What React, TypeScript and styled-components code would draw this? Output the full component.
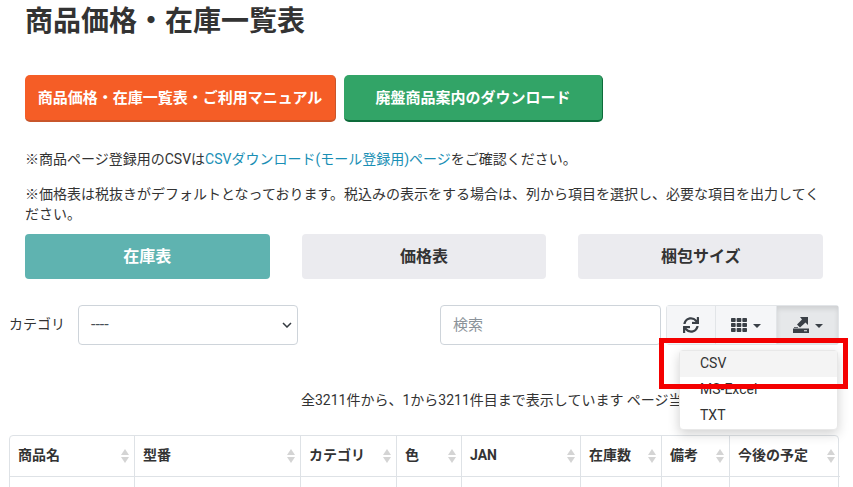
import React from 'react';
import styled, { createGlobalStyle } from 'styled-components';
import { FaSync, FaTh } from 'react-icons/fa';

const GlobalStyle = createGlobalStyle`
	html, body {
		margin: 0;
		height: 487px;
		overflow: hidden;
		background: #fff;
	}
	body {
		font-family: Roboto, 'Noto Sans CJK JP', sans-serif;
		font-size: 14px;
		line-height: 20px;
		color: #333;
	}
`;

const Page = styled.div`
	position: relative;
	width: 853px;
	height: 487px;
	overflow: hidden;
`;

const Content = styled.div`
	padding: 0 30px 0 25px;
`;

const Title = styled.h1`
	margin: 0;
	height: 75px;
	font-size: 28px;
	line-height: 44px;
	font-weight: 700;
	color: #333;
`;

const LinkRow = styled.div`
	display: flex;
	gap: 8px;
	height: 47px;
	margin-bottom: 27px;
`;

const LinkButton = styled.a<{ $bg: string; $edge: string; $width: number }>`
	display: flex;
	align-items: center;
	justify-content: center;
	box-sizing: border-box;
	width: ${p => p.$width}px;
	background: ${p => p.$bg};
	border-bottom: 2px solid ${p => p.$edge};
	border-right: 1px solid ${p => p.$edge};
	border-radius: 5px;
	color: #fff;
	font-size: 15px;
	font-weight: 700;
`;

const Note = styled.p`
	margin: 0 0 15px;
	font-size: 14px;
	line-height: 20px;
	color: #333;

	a {
		color: #1a8fb5;
	}
`;

const Tabs = styled.div`
	display: flex;
	gap: 32px;
	margin-top: -5px;
	width: 798px;
`;

const Tab = styled.div<{ $active?: boolean }>`
	flex: 1;
	height: 45px;
	display: flex;
	align-items: center;
	justify-content: center;
	border-radius: 4px;
	font-size: 16px;
	font-weight: 700;
	background: ${p => (p.$active ? '#5fb3b0' : '#ebebef')};
	color: ${p => (p.$active ? '#fff' : '#333')};
`;

const Toolbar = styled.div`
	display: flex;
	align-items: center;
	height: 40px;
	margin: 26px 14px 0 9px;
`;

const FilterLabel = styled.label`
	width: 69px;
	font-size: 14px;
	color: #333;
	margin-top: -3px;
`;

const SelectBox = styled.div`
	box-sizing: border-box;
	width: 220px;
	height: 40px;
	padding: 0 5px 0 12px;
	display: flex;
	align-items: center;
	justify-content: space-between;
	border: 1px solid #ced4da;
	border-radius: 4px;
	font-size: 16px;
	color: #495057;
`;

const SearchBox = styled.div`
	box-sizing: border-box;
	width: 221px;
	height: 40px;
	margin-left: 142px;
	padding: 0 12px;
	display: flex;
	align-items: center;
	border: 1px solid #ced4da;
	border-radius: 4px;
	font-size: 15px;
	color: #8a9299;
`;

const ButtonGroup = styled.div`
	display: flex;
	height: 40px;
	margin-left: 5px;
	border-radius: 4px;
	overflow: hidden;
`;

const ToolButton = styled.div<{ $width: number; $open?: boolean }>`
	box-sizing: border-box;
	width: ${p => p.$width}px;
	display: flex;
	align-items: center;
	justify-content: center;
	gap: 6px;
	color: #3a4047;
	border: 1px solid #e2e5e8;
	border-left: 0;
	background: ${p => (p.$open ? '#e6e8ea' : '#f5f6f8')};
	box-shadow: ${p => (p.$open ? 'inset 0 3px 5px rgba(0, 0, 0, 0.1)' : 'none')};

	&:first-child {
		border-left: 1px solid #e2e5e8;
	}
`;

const Caret = styled.span`
	width: 0;
	height: 0;
	margin-top: 2px;
	border-left: 4px solid transparent;
	border-right: 4px solid transparent;
	border-top: 4px solid #3a4047;
`;

const PageInfo = styled.div`
	margin: 45px 0 0;
	padding-left: 276px;
	height: 20px;
	white-space: nowrap;
	font-size: 14px;
	color: #333;
`;

const Table = styled.div`
	display: grid;
	grid-template-columns: 125px 166px 96px 65px 119px 81px 68px 110px;
	width: 830px;
	margin: 25px 0 0 -16px;
	border: 1px solid #dee2e6;
	border-radius: 4px 4px 0 0;
	box-sizing: border-box;
`;

const HeadCell = styled.div`
	box-sizing: border-box;
	height: 41px;
	padding: 0 5px 2px 8px;
	display: flex;
	align-items: center;
	justify-content: space-between;
	font-size: 14px;
	font-weight: 700;
	color: #333;
	border-right: 1px solid #dee2e6;
	border-bottom: 1px solid #dee2e6;

	&:nth-child(8n) {
		border-right: 0;
	}
`;

const BodyCell = styled.div`
	height: 40px;
	border-right: 1px solid #dee2e6;

	&:nth-child(8n) {
		border-right: 0;
	}
`;

const Sorter = styled.span`
	display: flex;
	flex-direction: column;
	gap: 2px;
	margin-top: 2px;

	&::before,
	&::after {
		content: '';
		width: 0;
		height: 0;
		border-left: 4px solid transparent;
		border-right: 4px solid transparent;
	}
	&::before {
		border-bottom: 6px solid #d4d4d4;
	}
	&::after {
		border-top: 6px solid #d4d4d4;
	}
`;

const Menu = styled.div`
	position: absolute;
	left: 679px;
	top: 350px;
	width: 159px;
	height: 80px;
	box-sizing: border-box;
	background: #fff;
	border-radius: 4px;
	border: 1px solid #e8e8e8;
	box-shadow: 0 4px 12px rgba(0, 0, 0, 0.18);
`;

const MenuItem = styled.div<{ $hover?: boolean }>`
	height: 26px;
	line-height: 25px;
	padding-left: 20px;
	font-size: 14px;
	color: #333;
	background: ${p => (p.$hover ? '#f4f4f4' : 'transparent')};
`;

const Highlight = styled.div`
	position: absolute;
	left: 659px;
	top: 338px;
	width: 189px;
	height: 51px;
	box-sizing: border-box;
	border: 5px solid #f40000;
`;

const ExportIcon = () => (
	<svg width='16' height='16' viewBox='0 0 16 16' fill='#3a4047'>
		<path fillRule='evenodd' d='M0 11.5h16V16H0zM11 13.3v1h3v-1z' />
		<path d='M1 10h4v.8H1z' />
		<path d='M7 0h8v8l-2.5-2.5L7 10.5l-3-3L9 2.5z' />
	</svg>
);

const Chevron = () => (
	<svg width='10' height='6' viewBox='0 0 10 6' fill='none' stroke='#343a40' strokeWidth='1.5'>
		<path d='M1 1l4 4 4-4' />
	</svg>
);

const columns = ['商品名', '型番', 'カテゴリ', '色', 'JAN', '在庫数', '備考', '今後の予定'];

export default function App() {
	return (
		<Page>
			<GlobalStyle />
			<Content>
				<Title>商品価格・在庫一覧表</Title>
				<LinkRow>
					<LinkButton $bg='#f55d26' $edge='#c9562b' $width={311}>
						商品価格・在庫一覧表・ご利用マニュアル
					</LinkButton>
					<LinkButton $bg='#32a467' $edge='#0d6b3a' $width={259}>
						廃盤商品案内のダウンロード
					</LinkButton>
				</LinkRow>
				<Note>
					※商品ページ登録用のCSVは<a>CSVダウンロード(モール登録用)ページ</a>をご確認ください。
				</Note>
				<Note>
					※価格表は税抜きがデフォルトとなっております。税込みの表示をする場合は、列から項目を選択し、必要な項目を出力してください。
				</Note>
				<Tabs>
					<Tab $active>在庫表</Tab>
					<Tab>価格表</Tab>
					<Tab>梱包サイズ</Tab>
				</Tabs>
			</Content>
			<Toolbar>
				<FilterLabel>カテゴリ</FilterLabel>
				<SelectBox>
					<span>----</span>
					<Chevron />
				</SelectBox>
				<SearchBox>検索</SearchBox>
				<ButtonGroup>
					<ToolButton $width={50}>
						<FaSync size={16} />
					</ToolButton>
					<ToolButton $width={61}>
						<FaTh size={16} />
						<Caret />
					</ToolButton>
					<ToolButton $width={62} $open>
						<ExportIcon />
						<Caret />
					</ToolButton>
				</ButtonGroup>
			</Toolbar>
			<Content>
				<PageInfo>全3211件から、1から3211件目まで表示しています ページ当たり</PageInfo>
				<Table>
					{columns.map(c => (
						<HeadCell key={c}>
							{c}
							<Sorter />
						</HeadCell>
					))}
					{columns.map(c => (
						<BodyCell key={c} />
					))}
				</Table>
			</Content>
			<Menu>
				<MenuItem $hover>CSV</MenuItem>
				<MenuItem>MS-Excel</MenuItem>
				<MenuItem>TXT</MenuItem>
			</Menu>
			<Highlight />
		</Page>
	);
}
